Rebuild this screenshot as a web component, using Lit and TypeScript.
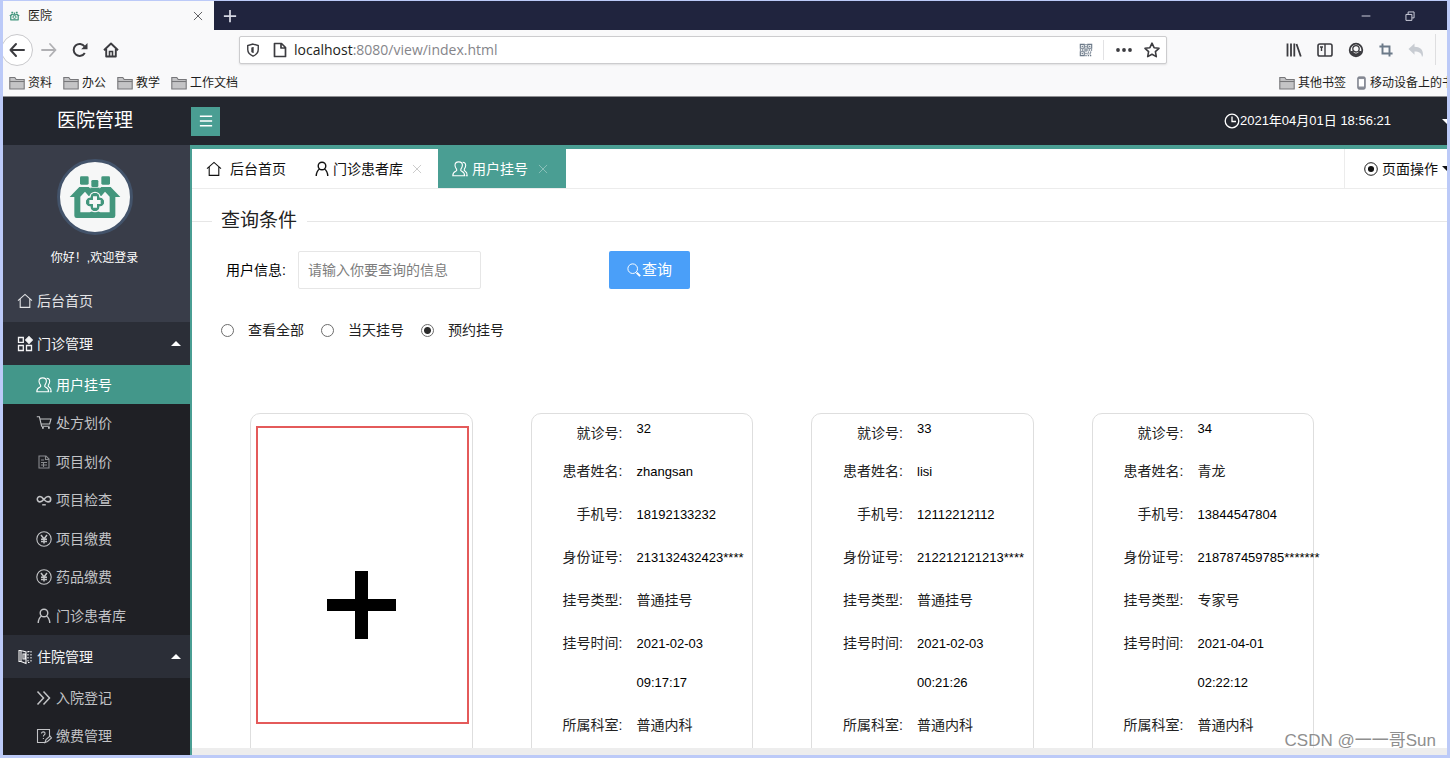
import { LitElement, html, svg, css, nothing } from "lit";
import { customElement, property, state } from "lit/decorators.js";
import { classMap } from "lit/directives/class-map.js";

const house = svg`<path d="M1 7.6 8 1.4l7 6.2M3.2 6v8.400h9.600V6" />`;
const user = svg`<circle cx="8" cy="5" r="3.800" stroke-width="1.400" /><path stroke-width="1.400" d="M5.600 8C3.400 9.400 2.400 11.600 2.200 15M10.400 8c2.200 1.400 3.200 3.600 3.400 7" />`;
const users = svg`<path d="M4.600 8.400C3.600 6.800 3 5.600 3 4.200 3 2.200 4.600.9 6.700.9s3.700 1.300 3.700 3.300c0 1.400-.6 2.600-1.600 4.200-.4.900 0 1.500.9 1.900 1.900.8 2.900 1.900 2.900 4.400H.8c0-2.500 1-3.600 2.900-4.400.9-.4 1.300-1 .9-1.900z"/><path d="M10.600 1.200c1.900.1 3.100 1.400 3.100 3.200 0 1.300-.6 2.500-1.400 3.900-.4.900 0 1.400.7 1.800 1.500.8 2.200 1.900 2.200 4.600h-1.400"/>`;
const yen = svg`<circle cx="8" cy="8" r="7.200" /><path stroke-width="1.500" d="M5 4l3 4 3-4M8 8v4.500M5 8.200h6M5 10.400h6" />`;

const ICONS: Record<string, unknown> = {
  house,
  user,
  users,
  yen,
  grid: svg`<path stroke-width="1.300" d="M1.500 1.500h4.800v4.800H1.500zM1.500 9.500h4.800v5H1.500zM9.500 9.500h5v5h-5z" /><path fill="currentColor" d="M12 .6 15.400 4 12 7.400 8.600 4z" />`,
  cart: svg`<path d="M.8 1.800h2.600l2.200 9.400h8M4 4h11l-1.400 5H5.200" /><path stroke-width="1.800" d="M6 12.800h1.800M12 12.800h1.800" />`,
  doc: svg`<path opacity=".65" d="M3 2h7l3 3v9H3zM9.500 2v3.500H13M5 6h3M5 8.500h6M5 11h6M7.500 8v5" />`,
  infinity: svg`<path stroke-width="1.600" d="M7.900 7.500C6.500 5.500 5.300 4.500 4 4.500a2.700 2.700 0 1 0 0 5.400c3.200 0 4.800-5.400 8-5.400a2.700 2.700 0 1 1 0 5.400c-1.300 0-2.600-1-4.100-2.400" /><path stroke-width="1.400" d="M6.200 12.800h3.600" />`,
  ward: svg`<path d="M2 1.500h2v11H2zM4 1.500l5 1.500v11.500l-5-2M6 5h2v5H6z" /><path stroke-dasharray="1.500 1.500" d="M11 2v12M14 2v12M11 2.500h3M11 13.500h3" />`,
  chevrons: svg`<path stroke-width="1.500" d="M1.500 1.500 7.500 8l-6 6.500M7.500 1.500l6 6.500-6 6.500" />`,
  bill: svg`<path d="M9 14.500H1.500v-13h12v7M5.500 5.500c0-2.400 4-2 3.500.4-.2 1-1.600 1.200-1.600 2.600M7.400 10v1" /><path d="M9 14.500l1-3 4-3.500 1.500 2-4 3.500z" />`,
  clock: svg`<circle cx="8" cy="8" r="6.800" stroke-width="1.300" /><path stroke-width="1.300" d="M8 3.500V8.500h4" />`,
  target: svg`<circle cx="8" cy="8" r="7.200" /><circle cx="8" cy="8" r="3.500" fill="currentColor" stroke="none" />`,
  close: svg`<path d="M1.500 1.500l13 13M14.500 1.500l-13 13" />`,
  search: svg`<circle cx="6.500" cy="6.500" r="5.500" /><path stroke-width="2.400" d="M11 11l4 4" />`,
  menu: svg`<path stroke-width="1.700" d="M1 2.500h14M1 8h14M1 13.500h14" />`,
  plus: svg`<path stroke-width="2" d="M8 1v14M1 8h14" />`,
  back: svg`<path stroke-width="2" stroke-linecap="round" stroke-linejoin="round" d="M15 8H1.500M7 2 1.500 8 7 14" />`,
  forward: svg`<path stroke-width="1.800" stroke-linecap="round" stroke-linejoin="round" d="M1 8h13.500M9 2l5.500 6L9 14" />`,
  reload: svg`<path stroke-width="2" d="M12.800 11A6 6 0 1 1 12.600 4.500" /><path fill="currentColor" stroke="none" d="M15.500 1v6.300H9.200z" />`,
  home: svg`<path stroke-width="1.900" stroke-linejoin="round" d="M1 8.200 8 1.500l7 6.700M3.200 7v7.500h9.600V7" /><path stroke-width="1.600" d="M6.500 14V9.500h3V14" />`,
  shield: svg`<path stroke-width="1.600" d="M8 1.200 14 3v4.500c0 3.500-2.400 6-6 7.500-3.600-1.500-6-4-6-7.500V3z" /><path stroke-width="1.500" d="M8 4.500v7M6.800 5v5.500" />`,
  page: svg`<path stroke-width="1.700" stroke-linejoin="round" d="M2.500 1.500h7L13.500 5.500v9h-11zM9 1.500V6h4.500" />`,
  qr: svg`<path stroke-width="1.300" d="M1.500 1.500h4.500V6H1.500zM10 1.500h4.500V6H10zM1.500 10H6v4.500H1.500z" /><path stroke-width="1.500" stroke-dasharray="1.500 1" d="M8 1v14M1 8h14M10 10.500h5M9.500 12.500h5M10 14.500h5M3 3.800h2M11.500 3.800h2M3 12.200h2" />`,
  dots: svg`<g fill="currentColor" stroke="none"><circle cx="2" cy="8" r="1.900" /><circle cx="8" cy="8" r="1.900" /><circle cx="14" cy="8" r="1.900" /></g>`,
  star: svg`<path stroke-width="1.600" stroke-linejoin="round" d="M8 1.200l2.100 4.500 4.900.6-3.600 3.400.9 4.900L8 12.200l-4.300 2.400.9-4.900L1 6.300l4.900-.6z" />`,
  library: svg`<path stroke-width="1.800" d="M1.500 1.500v13M5 1.500v13M8.300 1.500v13M10.500 2l4.300 12.500" />`,
  sidebar: svg`<rect x="1" y="2" width="14" height="12" rx="1.800" stroke-width="1.600" /><path stroke-width="1.400" d="M8 2v12M3 5h3M4.500 5v4" />`,
  account: svg`<circle cx="8" cy="8" r="6.300" stroke-width="1.800" /><path fill="currentColor" stroke="none" d="M2.500 9h2.300c.6 1.600 1.800 2.400 3.200 2.400s2.600-.8 3.200-2.400h2.300C13 12 11 14 8 14s-5-2-5.500-5z" /><circle cx="8" cy="6.800" r="3.200" stroke-width="1.300" />`,
  crop: svg`<path stroke-width="2.200" d="M4 .5V12h11.500M.5 4H12v11.500" />`,
  undo: svg`<path fill="currentColor" stroke="none" d="M6.500 1.500v3.300C12 5 15 7.500 15 12.500c0 1-.5 2-1 2.500-.3-3.800-3-5.500-7.500-5.500v3.300L.5 7z" />`,
  minimize: svg`<path stroke-width="1.500" d="M1 8h14" />`,
  restore: svg`<path stroke-width="1.500" d="M1.500 5.500H11V15H1.500zM5 5V1.500h9.500V11H11.500" />`,
  folder: svg`<path fill="#c4c4c6" stroke="#77777a" d="M.8 14V2.500h5l1.400 2h8V14z" /><path stroke="#77777a" d="M.8 6.500h14.400" />`,
  phone: svg`<rect x="2" y="1" width="8.500" height="14" rx="1.500" fill="#8b8f99" stroke="#777b85" /><path fill="#fff" stroke="none" d="M3.200 3.500h6v8.500h-6z" />`,
};

@customElement("ui-icon")
export class UiIcon extends LitElement {
  static styles = css`
    :host { display: inline-flex; flex: none; width: 16px; height: 16px; }
    .art { width: 100%; height: 100%; display: block; overflow: visible; }
  `;
  @property() name = "";
  render() {
    return html`<svg class="art" viewBox="0 0 16 16" fill="none" stroke="currentColor" stroke-width="1.1" aria-hidden="true">${ICONS[this.name]}</svg>`;
  }
}

@customElement("hospital-logo")
export class HospitalLogo extends LitElement {
  static styles = css`
    :host { display: block; width: 52px; height: 44px; }
    .art { width: 100%; height: 100%; display: block; }
  `;
  render() {
    return html`<svg class="art" viewBox="206 106 156 130" aria-hidden="true">
      <g fill="#43967d">
        <rect x="239" y="109" width="26" height="25" rx="4" />
        <rect x="273" y="120" width="21" height="21" rx="4" />
        <rect x="303" y="109" width="26" height="25" rx="4" />
        <path d="M208 171l29-30h28l19 16 19-16h28l29 30h-15v56q0 7-7 7H229q-7 0-7-7v-56z" />
      </g>
      <path fill="#f6f7f7" d="M240 217v-47l14-15 11 13h38l11-13 14 15v47h-28l-10-4h-12l-10 4z" />
      <path fill="#43967d" d="M270 143h28v20h-28z" />
      <g fill="#43967d" stroke="#f6f7f7" stroke-width="4">
        <circle cx="284" cy="172" r="15" /><circle cx="284" cy="200" r="15" />
        <circle cx="270" cy="186" r="15" /><circle cx="298" cy="186" r="15" />
      </g>
      <g fill="#43967d">
        <circle cx="284" cy="172" r="13" /><circle cx="284" cy="200" r="13" />
        <circle cx="270" cy="186" r="13" /><circle cx="298" cy="186" r="13" />
      </g>
      <path fill="#f6f7f7" d="M278 169h12v11h11v12h-11v11h-12v-11h-11v-12h11z" />
    </svg>`;
  }
}

@customElement("browser-chrome")
export class BrowserChrome extends LitElement {
  static styles = css`
    :host { display: block; color: #3c3c40; font-size: 12px; border-bottom: 1px solid #8f8f92; background: #f9f9fa; }
    button { border: 0; padding: 0; background: none; color: inherit; font: inherit; display: inline-flex; align-items: center; justify-content: center; }
    a { color: #1d1d20; text-decoration: none; display: flex; align-items: center; gap: 3px; white-space: nowrap; }
    .tabs { display: flex; height: 29px; background: #20243e; color: #d6d8e4; align-items: stretch; }
    .tab { display: flex; align-items: center; width: 211px; box-sizing: border-box; padding: 0 11px 0 6px; gap: 8px; background: #f9f9fa; color: #1d1d20; }
    .tab-title { flex: 1; }
    .fav { width: 11px; height: 10px; }
    .s10 { width: 10px; height: 10px; }
    .s14 { width: 14px; height: 14px; }
    .new { width: 32px; color: #d6d8e4; }
    .win { margin-left: auto; display: flex; gap: 34px; padding-right: 32px; }
    .bar { display: flex; align-items: center; height: 39px; box-sizing: border-box; }
    .nav { display: flex; align-items: center; width: 236px; flex: none; }
    .circle { width: 32px; height: 32px; border: 1px solid #c9c9cc; border-radius: 50%; background: #fff; margin-left: -2px; }
    .nav .plain { width: 31px; }
    .dim { color: #b0b0b3; }
    .url { flex: 1; min-width: 0; display: flex; align-items: center; height: 28px; box-sizing: border-box; border: 1px solid #ccccce; border-radius: 2px; background: #fff; padding: 0 6px; gap: 12px; box-shadow: 0 1px 2px #0000001a; }
    .address { flex: 1; font: 14px/20px "Open Sans", sans-serif; color: #85858a; margin-left: -6px; }
    .host { color: #1d1d20; }
    .split { width: 1px; height: 20px; background: #e2e2e4; }
    .qr { margin-right: -6px; padding-right: 4px; }
    .tools { display: flex; align-items: center; gap: 15px; padding: 0 11px 0 119px; }
    .tool-split { width: 1px; height: 31px; background: #dedee0; margin-left: -4px; }
    .slate { color: #6c7a89; }
    .faint { color: #c8ccd2; }
    .marks { display: flex; justify-content: space-between; height: 27px; align-items: center; padding-left: 6px; box-sizing: border-box; }
    .group { display: flex; gap: 11px; overflow: hidden; }
    .right { width: 168px; }
    .phone { gap: 0; margin-left: -1px; }
    .phone-icon { width: 14px; }
  `;
  render() {
    return html`
      <div class="tabs">
        <div class="tab">
          <hospital-logo class="fav"></hospital-logo><span class="tab-title">医院</span>
          <button aria-label="关闭标签页"><ui-icon class="s10" name="close"></ui-icon></button>
        </div>
        <button class="new" aria-label="新标签页"><ui-icon class="s14" name="plus"></ui-icon></button>
        <div class="win">
          <button aria-label="最小化"><ui-icon class="s10" name="minimize"></ui-icon></button>
          <button aria-label="还原"><ui-icon class="s10" name="restore"></ui-icon></button>
        </div>
      </div>
      <div class="bar">
        <div class="nav">
          <button class="circle" aria-label="后退"><ui-icon name="back"></ui-icon></button>
          <button class="plain dim" aria-label="前进"><ui-icon name="forward"></ui-icon></button>
          <button class="plain" aria-label="刷新"><ui-icon name="reload"></ui-icon></button>
          <button class="plain" aria-label="主页"><ui-icon name="home"></ui-icon></button>
        </div>
        <div class="url">
          <ui-icon class="s14" name="shield"></ui-icon>
          <ui-icon name="page"></ui-icon>
          <span class="address"><span class="host">localhost</span>:8080/view/index.html</span>
          <ui-icon class="s14 slate qr" name="qr"></ui-icon>
          <span class="split"></span>
          <ui-icon name="dots"></ui-icon>
          <ui-icon name="star"></ui-icon>
        </div>
        <div class="tools">
          <ui-icon name="library"></ui-icon>
          <ui-icon name="sidebar"></ui-icon>
          <ui-icon name="account"></ui-icon>
          <ui-icon class="s14 slate" name="crop"></ui-icon>
          <ui-icon class="faint" name="undo"></ui-icon>
          <span class="tool-split"></span>
        </div>
      </div>
      <div class="marks">
        <div class="group">
          ${["资料", "办公", "教学", "工作文档"].map((t) => html`<a href="#"><ui-icon name="folder"></ui-icon>${t}</a>`)}
        </div>
        <div class="group right">
          <a href="#"><ui-icon name="folder"></ui-icon>其他书签</a>
          <a href="#" class="phone"><ui-icon class="phone-icon" name="phone"></ui-icon>移动设备上的书签</a>
        </div>
      </div>`;
  }
}

interface MenuGroup { title: string; icon: string; items: [string, string][]; }

const MENU: MenuGroup[] = [
  {
    title: "门诊管理", icon: "grid",
    items: [["users", "用户挂号"], ["cart", "处方划价"], ["doc", "项目划价"], ["infinity", "项目检查"], ["yen", "项目缴费"], ["yen", "药品缴费"], ["user", "门诊患者库"]],
  },
  { title: "住院管理", icon: "ward", items: [["chevrons", "入院登记"], ["bill", "缴费管理"]] },
];

@customElement("side-menu")
export class SideMenu extends LitElement {
  static styles = css`
    :host { display: block; background: #393d49; color: #e3e4e6; font-size: 14px; overflow: hidden; }
    ul { list-style: none; margin: 0; padding: 0; }
    a { color: inherit; text-decoration: none; display: flex; align-items: center; gap: 4px; height: 100%; }
    .who { display: flex; flex-direction: column; align-items: center; gap: 13px; padding: 14px 4px 11px 0; font-size: 12px; line-height: 20px; color: #fff; }
    .avatar { width: 70px; height: 70px; border: 3px solid #43536a; border-radius: 50%; background: #f6f7f7; display: grid; place-items: center; }
    .top { height: 43px; padding-left: 14px; }
    .group { height: 43px; padding: 0 9px 0 14px; background: #2b2e37; color: #f4f4f5; }
    .up { margin-left: auto; border: 5px solid transparent; border-top: 0; border-bottom-color: #fff; }
    .sub { background: #1f2025; color: #c2c3c6; }
    .item { height: 38px; padding-left: 33px; }
    .item:nth-child(odd) { height: 39px; }
    .active { background: #43978a; color: #fff; }
  `;
  @state() private current = "用户挂号";
  render() {
    return html`
      <div class="who">
        <div class="avatar"><hospital-logo></hospital-logo></div>
        <span>你好！,欢迎登录</span>
      </div>
      <nav>
        <div class="top"><a href="#"><ui-icon name="house"></ui-icon>后台首页</a></div>
        ${MENU.map((g) => html`
          <div class="group"><a href="#"><ui-icon name=${g.icon}></ui-icon>${g.title}<span class="up"></span></a></div>
          <ul class="sub">
            ${g.items.map(([icon, text]) => html`
              <li class=${classMap({ item: true, active: text === this.current })}>
                <a href="#" @click=${() => (this.current = text)}><ui-icon name=${icon}></ui-icon>${text}</a>
              </li>`)}
          </ul>`)}
      </nav>`;
  }
}

interface Patient { no: string; name: string; phone: string; id: string; type: string; time: string; dept: string; }

const PATIENTS: Patient[] = [
  { no: "32", name: "zhangsan", phone: "18192133232", id: "213132432423****", type: "普通挂号", time: "2021-02-03 09:17:17", dept: "普通内科" },
  { no: "33", name: "lisi", phone: "12112212112", id: "212212121213****", type: "普通挂号", time: "2021-02-03 00:21:26", dept: "普通内科" },
  { no: "34", name: "青龙", phone: "13844547804", id: "218787459785*******", type: "专家号", time: "2021-04-01 02:22:12", dept: "普通内科" },
];

@customElement("patient-card")
export class PatientCard extends LitElement {
  static styles = css`
    :host { display: block; box-sizing: border-box; border: 1px solid #dedede; border-radius: 10px; min-height: 420px; color: #222; font-size: 14px; line-height: 39px; }
    dl { margin: 0; }
    .row { display: grid; grid-template-columns: 91px minmax(0, 1fr); column-gap: 14px; padding-bottom: 4px; }
    .first { padding-bottom: 0; line-height: 38px; }
    dt { text-align: right; white-space: nowrap; }
    dd { margin: 0; }
    .latin { font-size: 13px; color: #000; width: 90px; }
    .first .latin { line-height: 30px; }
  `;
  @property({ attribute: false }) patient!: Patient;
  render() {
    const p = this.patient;
    const rows = [["就诊号", p.no], ["患者姓名", p.name], ["手机号", p.phone], ["身份证号", p.id], ["挂号类型", p.type], ["挂号时间", p.time], ["所属科室", p.dept]];
    return html`<dl>
      ${rows.map(([k, v], i) => html`
        <div class=${classMap({ row: true, first: i === 0 })}>
          <dt>${k}:</dt><dd class=${classMap({ latin: /^[\x20-\x7e]+$/.test(v) })}>${v}</dd>
        </div>`)}
    </dl>`;
  }
}

@customElement("app-root")
export class AppRoot extends LitElement {
  static styles = css`
    :host {
      display: grid; grid-template-rows: auto auto minmax(0, 1fr); height: 100vh; box-sizing: border-box; overflow: hidden;
      border: 3px solid #bccaf8; border-top-width: 1px; background: #fff; color: #222;
      font: 14px/20px "Liberation Sans", "Noto Sans CJK SC", sans-serif;
    }
    button { font: inherit; color: inherit; border: 0; padding: 0; background: none; }
    .top { display: flex; align-items: center; height: 48px; background: #23262e; color: #fff; overflow: hidden; }
    .brand { width: 184px; padding-right: 4px; flex: none; text-align: center; font-size: 19px; line-height: 28px; }
    .burger { width: 29px; height: 29px; background: #4a9e93; display: grid; place-items: center; }
    .time { margin-left: auto; display: flex; align-items: center; font-size: 13px; padding-right: 51px; }
    .s14 { width: 14px; height: 14px; }
    .s10 { width: 10px; height: 10px; }
    .down { border: 5px solid transparent; border-bottom: 0; border-top-color: currentColor; margin-right: -5px; flex: none; }
    .body { display: grid; grid-template-columns: 187px minmax(0, 1fr); min-height: 0; }
    .main { display: flex; flex-direction: column; min-width: 0; min-height: 0; border-left: 2px solid #4a9e93; border-top: 4px solid #4a9e93; }
    .tabs { display: flex; height: 39px; flex: none; border-bottom: 1px solid #ececec; }
    .tab { display: flex; align-items: center; gap: 4px; padding: 0 14px; color: #111; }
    .tab:first-child { gap: 8px; }
    .tab:nth-child(2) { gap: 3px; }
    .tab .s10 { color: #b4b4b4; margin: 0 2px 0 6px; }
    .tab:nth-child(3) { background: #4a9e93; color: #fff; padding-right: 16px; }
    .tab:nth-child(3) .s10 { color: #a6cfc9; }
    .ops { margin-left: auto; display: flex; align-items: center; gap: 4px; padding-left: 19px; border-left: 1px solid #ececec; overflow: hidden; color: #111; }
    .scroll { flex: 1; min-height: 0; overflow: hidden; padding-top: 18px; border-bottom: 7px solid #ededed; }
    fieldset { margin: 0; padding: 0; border: 0; border-top: 1px solid #e6e6e6; min-width: 0; }
    legend { margin-left: 20px; padding: 0 10px 0 9px; font-size: 19px; line-height: 28px; }
    .form { display: flex; align-items: center; padding: 16px 0 0 34px; }
    .form label { margin-right: 12px; color: #000; }
    .query { width: 183px; height: 38px; box-sizing: border-box; border: 1px solid #e6e6e6; border-radius: 2px; padding: 0 9px; font: inherit; }
    .query::placeholder { color: #7d7d7d; opacity: 1; }
    .go { margin-left: 128px; width: 81px; height: 38px; border-radius: 2px; background: #4a9ff9; color: #fff; font-size: 15px; display: flex; align-items: center; justify-content: center; gap: 1px; }
    .radios { display: flex; gap: 17px; padding: 31px 0 0 29px; }
    .radios label { display: flex; align-items: center; gap: 14px; }
    .radio { appearance: none; width: 13px; height: 13px; margin: 0; border: 1px solid #6c6c6c; border-radius: 50%; background: #fff; box-sizing: border-box; }
    .radio:checked { background: radial-gradient(circle, #2b2b2b 0 3px, #fff 4px); }
    .cards { display: grid; grid-template-columns: repeat(4, minmax(0, 1fr)); gap: 58px; padding: 73px 133px 0 58px; }
    .add { box-sizing: border-box; border: 1px solid #dedede; border-radius: 10px; padding: 12px 3px 0 5px; }
    .add-btn { width: 100%; height: 298px; box-sizing: border-box; border: 2px solid #e45a5a; display: grid; place-items: center; padding: 60px 2px 0 0; color: #000; }
    .cross { width: 69px; height: 68px; display: block; }
    .mark { position: absolute; right: 14px; bottom: 5px; font: 17px/24px "Liberation Sans", "Noto Sans CJK SC", sans-serif; color: #8f8f8f; text-shadow: 0 0 2px #fff; }
  `;
  @state() private scope = "预约挂号";
  private tab(icon: string, text: string, closable: boolean) {
    return html`<div class="tab"><ui-icon name=${icon}></ui-icon>${text}${closable
      ? html`<button aria-label="关闭"><ui-icon class="s10" name="close"></ui-icon></button>` : nothing}</div>`;
  }
  render() {
    return html`
      <browser-chrome></browser-chrome>
      <header class="top">
        <div class="brand">医院管理</div>
        <button class="burger" aria-label="菜单"><ui-icon class="s14" name="menu"></ui-icon></button>
        <div class="time"><ui-icon name="clock"></ui-icon>2021年04月01日 18:56:21</div>
        <span class="down"></span>
      </header>
      <div class="body">
        <side-menu></side-menu>
        <main class="main">
          <div class="tabs">
            ${this.tab("house", "后台首页", false)}${this.tab("user", "门诊患者库", true)}${this.tab("users", "用户挂号", true)}
            <div class="ops"><ui-icon class="s14" name="target"></ui-icon>页面操作<span class="down"></span></div>
          </div>
          <div class="scroll">
            <fieldset>
              <legend>查询条件</legend>
              <div class="form">
                <label for="info">用户信息:</label>
                <input id="info" class="query" type="text" placeholder="请输入你要查询的信息" />
                <button class="go"><ui-icon name="search" class="s14"></ui-icon>查询</button>
              </div>
              <div class="radios">
                ${["查看全部", "当天挂号", "预约挂号"].map((t) => html`
                  <label><input class="radio" type="radio" name="scope" .checked=${t === this.scope} @change=${() => (this.scope = t)} />${t}</label>`)}
              </div>
            </fieldset>
            <div class="cards">
              <div class="add">
                <button class="add-btn" aria-label="新增挂号">
                  <svg class="cross" viewBox="0 0 69 68" aria-hidden="true"><path d="M28 0h13v28h28v12H41v28H28V40H0V28h28z" /></svg>
                </button>
              </div>
              ${PATIENTS.map((p) => html`<patient-card .patient=${p}></patient-card>`)}
            </div>
          </div>
        </main>
      </div>
      <span class="mark">CSDN @一一哥Sun</span>`;
  }
}
